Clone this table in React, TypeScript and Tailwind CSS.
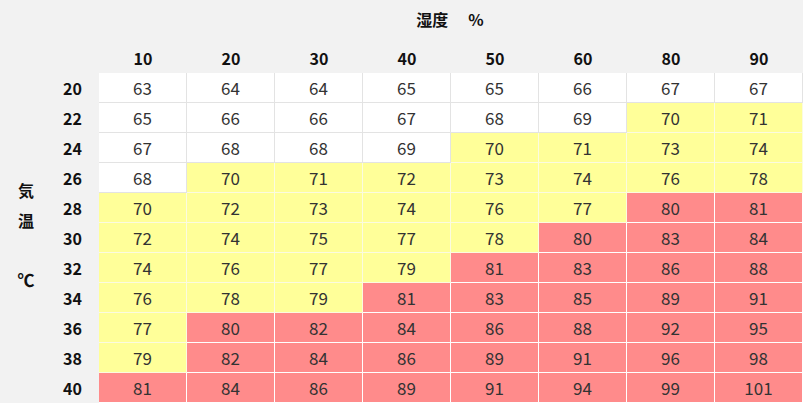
const humidity = [10, 20, 30, 40, 50, 60, 80, 90]

const rows: [number, number[]][] = [
  [20, [63, 64, 64, 65, 65, 66, 67, 67]],
  [22, [65, 66, 66, 67, 68, 69, 70, 71]],
  [24, [67, 68, 68, 69, 70, 71, 73, 74]],
  [26, [68, 70, 71, 72, 73, 74, 76, 78]],
  [28, [70, 72, 73, 74, 76, 77, 80, 81]],
  [30, [72, 74, 75, 77, 78, 80, 83, 84]],
  [32, [74, 76, 77, 79, 81, 83, 86, 88]],
  [34, [76, 78, 79, 81, 83, 85, 89, 91]],
  [36, [77, 80, 82, 84, 86, 88, 92, 95]],
  [38, [79, 82, 84, 86, 89, 91, 96, 98]],
  [40, [81, 84, 86, 89, 91, 94, 99, 101]],
]

function cellClass(v: number) {
  if (v >= 80) return 'bg-[#ff8b8b] border-white'
  if (v >= 70) return 'bg-[#ffff99] border-[#fbfbe0]'
  return 'bg-white border-[#e3e3e3]'
}

export default function App() {
  return (
    <div
      className="w-[804px] h-[404px] bg-white text-[#111]"
      style={{ fontFamily: '"Noto Sans CJK JP", "Noto Sans", sans-serif' }}
    >
      <div className="grid grid-cols-[50px_49px_repeat(8,88px)] grid-rows-[37px_36px_repeat(11,30px)] bg-[#f2f2f2] w-[803px]">
        {/* title */}
        <div className="col-span-2" />
        <div className="col-span-8 flex items-center justify-center font-bold text-[16px] pr-[2px]">
          湿度<span className="ml-[20px]">%</span>
        </div>

        {/* humidity header */}
        <div className="col-span-2" />
        {humidity.map((h) => (
          <div key={h} className="flex items-center justify-center font-bold text-[16px] pt-[5px]">
            {h}
          </div>
        ))}

        {/* vertical label */}
        <div className="row-span-11 flex flex-col items-center justify-center font-bold text-[16px] pl-[2px] pb-[6px]">
          <div className="h-[30px] flex items-center">気</div>
          <div className="h-[30px] flex items-center">温</div>
          <div className="h-[30px]" />
          <div className="h-[30px] flex items-center text-[17px]">℃</div>
        </div>

        {rows.map(([t, vals]) => (
          <div key={t} className="contents">
            <div className="flex items-center justify-end pr-[17px] font-bold text-[16px]">{t}</div>
            {vals.map((v, i) => (
              <div
                key={i}
                className={`flex items-center justify-center text-[17px] text-[#333] border-r border-b ${cellClass(v)}`}
              >
                {v}
              </div>
            ))}
          </div>
        ))}
      </div>
    </div>
  )
}
